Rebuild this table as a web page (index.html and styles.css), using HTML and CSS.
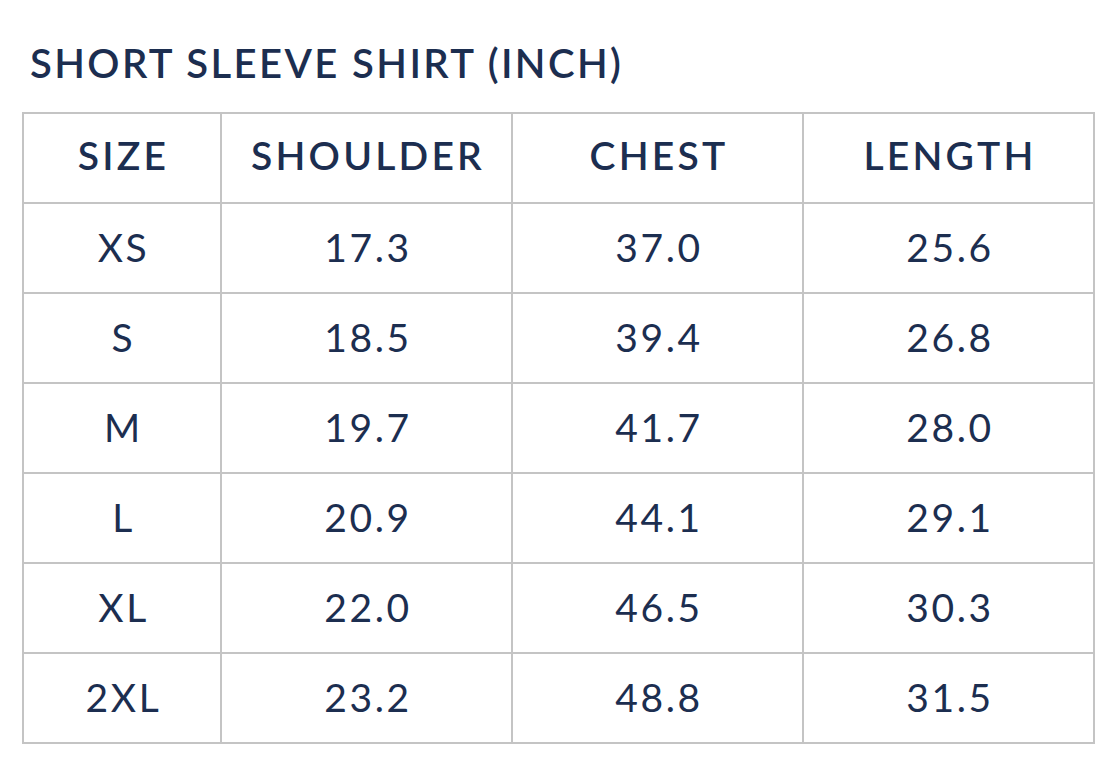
FILE: index.html
```html
<!DOCTYPE html>
<html>
<head>
<meta charset="utf-8">
<link rel="stylesheet" href="styles.css">
</head>
<body>
<div class="page">
  <h1 class="title">SHORT SLEEVE SHIRT (INCH)</h1>
  <table class="chart">
    <colgroup>
      <col class="c-size"><col class="c-val"><col class="c-val"><col class="c-val">
    </colgroup>
    <thead>
      <tr><th>SIZE</th><th>SHOULDER</th><th>CHEST</th><th>LENGTH</th></tr>
    </thead>
    <tbody>
      <tr><td>XS</td><td>17.3</td><td>37.0</td><td>25.6</td></tr>
      <tr><td>S</td><td>18.5</td><td>39.4</td><td>26.8</td></tr>
      <tr><td>M</td><td>19.7</td><td>41.7</td><td>28.0</td></tr>
      <tr><td>L</td><td>20.9</td><td>44.1</td><td>29.1</td></tr>
      <tr><td>XL</td><td>22.0</td><td>46.5</td><td>30.3</td></tr>
      <tr><td>2XL</td><td>23.2</td><td>48.8</td><td>31.5</td></tr>
    </tbody>
  </table>
</div>
</body>
</html>
```
FILE: styles.css
```css
html, body {
  margin: 0;
  padding: 0;
  background: #ffffff;
}
body {
  font-family: "Lato", "Noto Sans", sans-serif;
  color: #1c2e50;
}
.page {
  padding: 40px 0 0 22px;
}
.title {
  margin: 0 0 0 8px;
  font-size: 40px;
  font-weight: 600;
  line-height: 47px;
  letter-spacing: 2.4px;
  height: 72px;
}
.chart {
  border-collapse: collapse;
  width: 1072px;
  table-layout: fixed;
}
.c-size { width: 198px; }
.c-val { width: 291px; }
.chart th, .chart td {
  border: 2px solid #c4c4c4;
  height: 88px;
  padding: 0;
  text-align: center;
  vertical-align: middle;
  font-size: 39px;
  line-height: 46px;
}
.chart th {
  font-weight: 600;
  letter-spacing: 3.2px;
  padding: 0 0 6px 3px;
  height: 82px;
}
.chart td {
  font-weight: 400;
  letter-spacing: 2.6px;
  padding: 0 0 2px 3px;
  height: 86px;
}
```
